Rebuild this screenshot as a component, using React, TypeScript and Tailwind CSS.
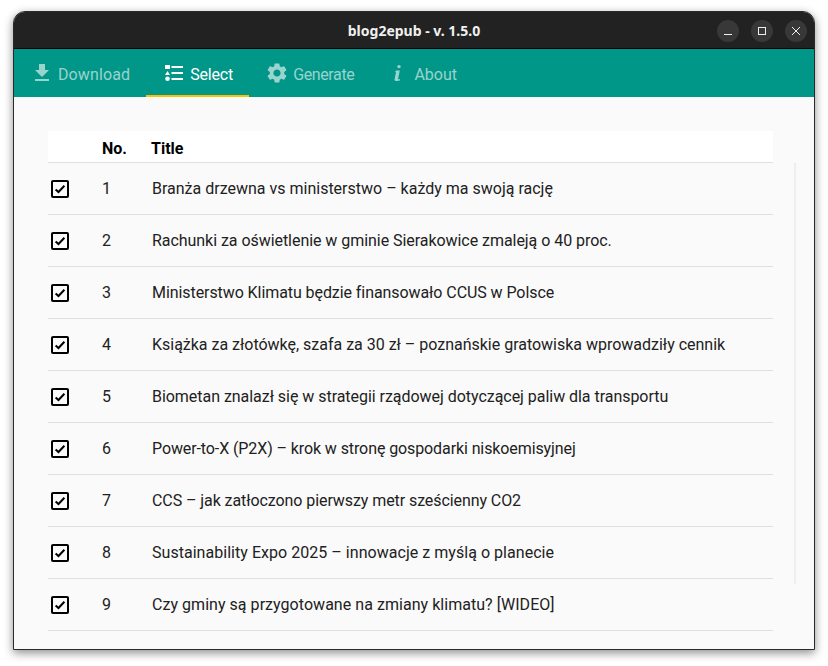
import { MdFileDownload, MdSettings } from "react-icons/md";

const rows = [
  { title: "Branża drzewna vs ministerstwo – każdy ma swoją rację", fit: "tracking-[0px]" },
  { title: "Rachunki za oświetlenie w gminie Sierakowice zmaleją o 40 proc.", fit: "tracking-[-0.05px]" },
  { title: "Ministerstwo Klimatu będzie finansowało CCUS w Polsce", fit: "tracking-[-0.075px]" },
  { title: "Książka za złotówkę, szafa za 30 zł – poznańskie gratowiska wprowadziły cennik", fit: "tracking-[-0.013px]" },
  { title: "Biometan znalazł się w strategii rządowej dotyczącej paliw dla transportu", fit: "tracking-[-0.04px]" },
  { title: "Power-to-X (P2X) – krok w stronę gospodarki niskoemisyjnej", fit: "tracking-[-0.1px]" },
  { title: "CCS – jak zatłoczono pierwszy metr sześcienny CO2", fit: "tracking-[-0.08px]" },
  { title: "Sustainability Expo 2025 – innowacje z myślą o planecie", fit: "tracking-[0.036px]" },
  { title: "Czy gminy są przygotowane na zmiany klimatu? [WIDEO]", fit: "tracking-[0.04px]" },
];

function ListIcon() {
  return (
    <svg width="24" height="24" viewBox="0 0 24 24" fill="currentColor">
      <rect x="3" y="4" width="5" height="4" />
      <path d="M5.5 10l2.5 4H3z" />
      <circle cx="5.5" cy="17.7" r="2.3" />
      <rect x="9.5" y="5" width="11.5" height="2" />
      <rect x="9.5" y="11" width="11.5" height="2" />
      <rect x="9.5" y="17" width="11.5" height="2" />
    </svg>
  );
}

function InfoIcon() {
  return (
    <svg width="24" height="24" viewBox="0 0 24 24" fill="currentColor">
      <circle cx="13" cy="5.6" r="1.7" />
      <path d="M10 9.6h3.8l-1.7 8.2q-.1.5.5.5h1.6l-.3 1.3c-2.6.6-5.7.6-5.4-1.2l1.5-7.4-.9-.1z" />
    </svg>
  );
}

function Tab({ icon, label, active, fit }: { icon: React.ReactNode; label: string; active?: boolean; fit?: string }) {
  return (
    <div
      className={
        "flex h-12 items-center gap-1 border-b-2 px-4 pt-0.5 text-base font-['Roboto',sans-serif] " +
        (active ? "border-[#ffc107] text-white" : "border-transparent text-white/60")
      }
    >
      {icon}
      <span className={"pt-1 " + (fit ?? "")}>{label}</span>
    </div>
  );
}

function WinButton({ children }: { children: React.ReactNode }) {
  return (
    <div className="flex h-[22px] w-[22px] items-center justify-center rounded-full bg-[#383838] text-[#eeeeee]">
      <svg width="10" height="10" viewBox="0 0 10 10" fill="none" stroke="currentColor" strokeWidth="1">
        {children}
      </svg>
    </div>
  );
}

function Checkbox() {
  return (
    <div className="flex h-[18px] w-[18px] items-center justify-center rounded-[2px] border-2 border-black">
      <svg width="12" height="12" viewBox="0 0 12 12" fill="none" stroke="black" strokeWidth="2">
        <path d="M1.6 6.4l2.9 2.6 5.9-6.2" />
      </svg>
    </div>
  );
}

export default function App() {
  return (
    <div className="h-[666px] w-[828px] bg-white pl-[13px] pt-[11px]">
      <div className="flex h-[639px] w-[802px] flex-col overflow-hidden rounded-t-[12px] border border-[#2a2a2a] bg-[#fafafa] shadow-[0_3px_10px_rgba(0,0,0,0.45)]">
        <div className="relative flex h-[36px] shrink-0 items-center bg-[#222222] pl-[688px] pr-[7px] pt-px">
          <div className="absolute inset-x-0 text-center font-['Noto_Sans',sans-serif] text-[14px] font-bold text-[#f0f0f0]">
            blog2epub - v. 1.5.0
          </div>
          <div className="relative flex gap-[12px] pl-[15px]">
            <WinButton><path d="M1 8.5h8" /></WinButton>
            <WinButton><rect x="1.5" y="1.5" width="7" height="7" /></WinButton>
            <WinButton><path d="M1 1l8 8M9 1l-8 8" /></WinButton>
          </div>
        </div>
        <div className="h-px shrink-0 bg-black" />
        <div className="flex h-12 shrink-0 bg-[#009688]">
          <Tab icon={<MdFileDownload size={24} />} label="Download" fit="tracking-[0.12px]" />
          <Tab icon={<ListIcon />} label="Select" active fit="tracking-[-0.17px]" />
          <Tab icon={<MdSettings size={24} />} label="Generate" fit="tracking-[-0.37px]" />
          <Tab icon={<InfoIcon />} label="About" />
        </div>
        <div className="flex flex-1 pl-[34px] pt-[34px] font-['Roboto',sans-serif]">
          <div className="w-[725px]">
            <div className="flex h-8 items-center border-b border-[#e0e0e0] bg-white pt-1 text-base font-bold text-black">
              <div className="w-[54px]" />
              <div className="w-[49px]">No.</div>
              <div>Title</div>
            </div>
            {rows.map((r, i) => (
              <div key={r.title} className="flex h-[52px] items-center border-b border-[#e0e0e0] text-base text-[#212121]">
                <div className="w-[54px] pl-[3px]"><Checkbox /></div>
                <div className="w-[50px]">{i + 1}</div>
                <div className={r.fit}>{r.title}</div>
              </div>
            ))}
          </div>
          <div className="ml-[21px] mt-8 h-[421px] w-[2px] bg-[#eeeeee]" />
        </div>
      </div>
    </div>
  );
}
